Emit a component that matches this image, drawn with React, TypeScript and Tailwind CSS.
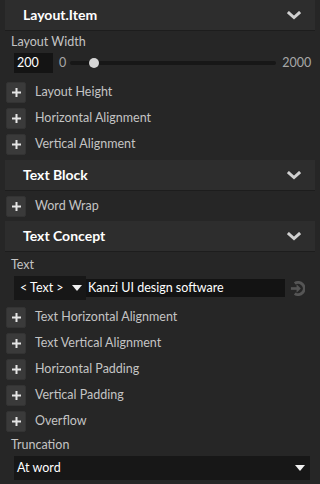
import React from 'react';

const font = { fontFamily: '"Segoe UI", Lato, "Open Sans", sans-serif' };

const Chevron: React.FC = () => (
  <svg width="14" height="9" viewBox="0 0 14 9" className="block">
    <polyline points="2,2 7,6.5 12,2" fill="none" stroke="#d0d0d0" strokeWidth="3" strokeLinecap="square" />
  </svg>
);

const Header: React.FC<{ title: string }> = ({ title }) => (
  <div className="mx-[5px] h-[31px] bg-[#2d2d2d] border-b border-[#1d1d1d] flex items-center justify-between pl-[18px] pr-[14px]">
    <span className="text-white font-bold text-[14px] leading-[18px] -mt-[1px]">{title}</span>
    <Chevron />
  </div>
);

const PlusRow: React.FC<{ label: string }> = ({ label }) => (
  <div className="h-[26px] flex items-center">
    <div className="ml-[6px] w-[20px] h-[21px] rounded-[2px] bg-[#3a3a3a] border border-[#333] flex items-center justify-center">
      <svg width="9" height="9" viewBox="0 0 9 9">
        <rect x="3.5" y="0" width="2" height="9" fill="#e6e6e6" />
        <rect x="0" y="3.5" width="9" height="2" fill="#e6e6e6" />
      </svg>
    </div>
    <span className="ml-[9px] text-[12.5px] text-[#c4c4c4]">{label}</span>
  </div>
);

const Label: React.FC<{ text: string }> = ({ text }) => (
  <div className="pl-[11px] h-[16px] leading-[16px] text-[12.5px] text-[#c4c4c4]">{text}</div>
);

const Triangle: React.FC = () => (
  <svg width="10" height="6" viewBox="0 0 10 6" className="block">
    <polygon points="0,0 10,0 5,6" fill="#f0f0f0" />
  </svg>
);

export default function App() {
  return (
    <div className="w-[320px] h-[484px] bg-[#262626] overflow-hidden select-none" style={font}>
      <Header title="Layout.Item" />
      <div className="pt-[3px]">
        <Label text="Layout Width" />
        <div className="mt-[3px] flex items-center h-[20px]">
          <div className="ml-[14px] w-[39px] h-[20px] bg-[#141414] text-white text-[12.5px] leading-[20px] pl-[3px]">200</div>
          <span className="ml-[6px] text-[12.5px] text-[#a8a8a8]">0</span>
          <div className="relative ml-[4px] w-[206px] h-[4px] rounded-full bg-[#171717]">
            <div className="absolute left-[19px] top-[-3px] w-[10px] h-[10px] rounded-full bg-[#d6d6d6]" />
          </div>
          <span className="ml-[6px] text-[12.5px] text-[#a8a8a8]">2000</span>
        </div>
        <div className="mt-[6px]">
          <PlusRow label="Layout Height" />
          <PlusRow label="Horizontal Alignment" />
          <PlusRow label="Vertical Alignment" />
        </div>
        <div className="h-[3px]" />
      </div>
      <Header title="Text Block" />
      <div className="h-[30px] flex items-center">
        <div className="w-full">
          <PlusRow label="Word Wrap" />
        </div>
      </div>
      <Header title="Text Concept" />
      <div className="pt-[5px]">
        <Label text="Text" />
        <div className="mt-[3px] flex items-center h-[24px]">
          <div className="ml-[14px] w-[72px] h-[24px] bg-[#171717] flex items-center justify-between pl-[6px] pr-[4px]">
            <span className="text-white text-[12.5px]">&lt; Text &gt;</span>
            <Triangle />
          </div>
          <div className="w-[199px] h-[18px] bg-[#131313] text-white text-[12.5px] leading-[18px] pl-[2px]">
            Kanzi UI design software
          </div>
          <svg width="15" height="15" viewBox="0 0 16 16" className="ml-[5px]">
            <path d="M5 2.6 A6.5 6.5 0 1 1 5 13.4" fill="none" stroke="#555" strokeWidth="3" />
            <rect x="1" y="6.6" width="7" height="2.8" fill="#555" />
            <polygon points="7,3.5 11.5,8 7,12.5" fill="#555" />
          </svg>
        </div>
        <div className="mt-[4px]">
          <PlusRow label="Text Horizontal Alignment" />
          <PlusRow label="Text Vertical Alignment" />
          <PlusRow label="Horizontal Padding" />
          <PlusRow label="Vertical Padding" />
          <PlusRow label="Overflow" />
        </div>
        <div className="mt-[3px]">
          <Label text="Truncation" />
        </div>
        <div className="mt-[3px] ml-[14px] w-[296px] h-[24px] bg-[#171717] flex items-center justify-between pl-[3px] pr-[5px]">
          <span className="text-white text-[12.5px]">At word</span>
          <Triangle />
        </div>
      </div>
    </div>
  );
}
